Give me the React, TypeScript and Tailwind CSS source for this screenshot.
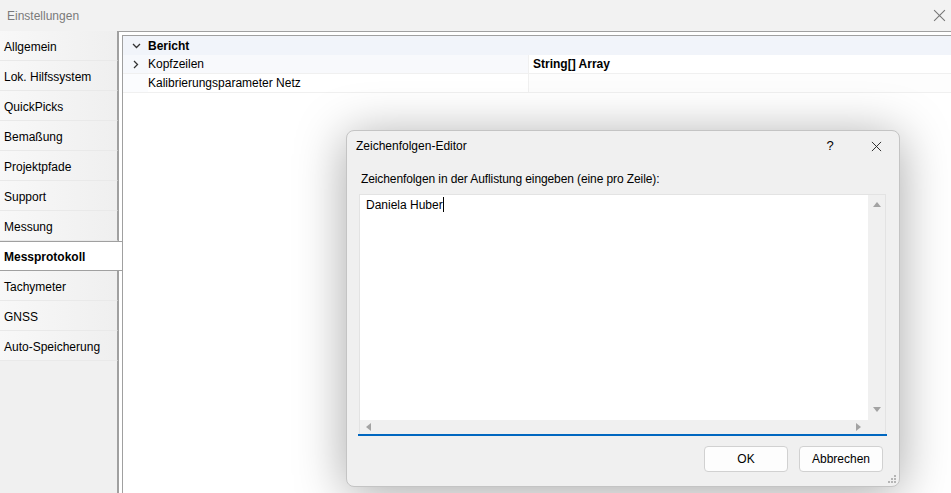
import React from "react";

const tabs = [
  "Allgemein",
  "Lok. Hilfssystem",
  "QuickPicks",
  "Bemaßung",
  "Projektpfade",
  "Support",
  "Messung",
  "Messprotokoll",
  "Tachymeter",
  "GNSS",
  "Auto-Speicherung",
];

const selected = "Messprotokoll";

function CloseIcon({ size = 12, color = "#333" }: { size?: number; color?: string }) {
  return (
    <svg width={size} height={size} viewBox="0 0 12 12" fill="none">
      <path d="M1 1L11 11M11 1L1 11" stroke={color} strokeWidth="1" />
    </svg>
  );
}

function Arrow({ dir }: { dir: "up" | "down" | "left" | "right" }) {
  const paths = {
    up: "M0 6L4 1L8 6Z",
    down: "M0 1L8 1L4 6Z",
    left: "M6 0L6 8L1 4Z",
    right: "M1 0L6 4L1 8Z",
  };
  return (
    <svg width="8" height="8" viewBox="0 0 8 8">
      <path d={paths[dir]} fill="#a3a3a3" />
    </svg>
  );
}

function Sidebar() {
  return (
    <div className="w-[118px] shrink-0 flex flex-col bg-[#f0f0f0]">
      {tabs.map((t) =>
        t === selected ? (
          <div
            key={t}
            className="relative z-10 w-[122px] h-[30px] flex items-center pl-[4px] pt-[1px] bg-white border-y border-[#a0a0a0] font-bold text-black"
          >
            {t}
          </div>
        ) : (
          <div
            key={t}
            className="h-[30px] flex items-center pl-[4px] pt-[2px] border-r border-[#a0a0a0] border-b border-b-[#e9e9e9] bg-gradient-to-r from-[#f8f8f8] to-[#efefef] text-black"
          >
            {t}
          </div>
        )
      )}
      <div className="flex-1 border-r border-[#a0a0a0]" />
    </div>
  );
}

function PropertyGrid() {
  return (
    <div className="flex-1 border-l border-t border-[#a0a0a0] bg-white pl-[3px] pt-[3px]">
      <div className="h-full border-l border-t border-[#a0a0a0] bg-white">
        <div className="h-[19px] flex items-center bg-[#f1f4fa]">
          <div className="w-[25px] flex justify-center pl-[1px]">
            <svg width="9" height="6" viewBox="0 0 9 6" fill="none">
              <path d="M1 1L4.5 4.5L8 1" stroke="#333" strokeWidth="1.3" />
            </svg>
          </div>
          <span className="font-bold">Bericht</span>
        </div>
        <div className="h-[19px] flex items-stretch border-b border-[#f0f0f0]">
          <div className="w-[25px] flex items-center justify-center bg-[#f6f8fc]">
            <svg width="6" height="9" viewBox="0 0 6 9" fill="none">
              <path d="M1 1L4.5 4.5L1 8" stroke="#333" strokeWidth="1.3" />
            </svg>
          </div>
          <div className="w-[381px] flex items-center bg-[#f8f9fc] border-r border-[#f0f0f0]">Kopfzeilen</div>
          <div className="flex-1 flex items-center pl-[4px] font-bold">String[] Array</div>
        </div>
        <div className="h-[19px] flex items-stretch border-b border-[#f0f0f0]">
          <div className="w-[25px] bg-[#fbfcfe]" />
          <div className="w-[381px] flex items-center border-r border-[#f0f0f0]">Kalibrierungsparameter Netz</div>
          <div className="flex-1 bg-[#fdfdfd]" />
        </div>
      </div>
    </div>
  );
}

function Dialog() {
  return (
    <div className="absolute left-[346px] top-[130px] w-[554px] h-[357px] rounded-[8px] bg-[#f0f0f0] border border-[#c4c4c4] shadow-[0_6px_50px_rgba(0,0,0,0.35)] flex flex-col">
      <div className="h-[30px] flex items-center pl-[9px]">
        <span className="flex-1">Zeichenfolgen-Editor</span>
        <span className="w-[46px] text-center text-[13px]">?</span>
        <div className="w-[46px] flex justify-center">
          <CloseIcon size={11} color="#222" />
        </div>
      </div>
      <div className="pl-[14px] pt-[9px] h-[33px] tracking-[-0.1px]">Zeichenfolgen in der Auflistung eingeben (eine pro Zeile):</div>
      <div className="ml-[12px] mr-[13px] h-[242px] flex flex-col border border-[#e3e3e3] border-b-0">
        <div className="flex-1 flex">
          <div className="flex-1 bg-white pl-[6px] pt-[1px]">
            <span>Daniela Huber</span>
            <span className="inline-block w-[1px] h-[15px] bg-black align-middle -mt-[2px]" />
          </div>
          <div className="w-[17px] bg-[#f0f0f0] flex flex-col items-center justify-between py-[6px]">
            <Arrow dir="up" />
            <Arrow dir="down" />
          </div>
        </div>
        <div className="h-[14px] flex items-center justify-between pl-[5px] pr-[22px] bg-[#f0f0f0]">
          <Arrow dir="left" />
          <Arrow dir="right" />
        </div>
        <div className="h-[2px] bg-[#0067c0] -mx-[2px]" />
      </div>
      <div className="flex justify-end gap-[11px] mr-[16px] mt-[10px]">
        <button className="w-[84px] h-[26px] rounded-[4px] bg-[#fdfdfd] border border-[#d1d1d1] text-black">OK</button>
        <button className="w-[84px] h-[26px] rounded-[4px] bg-[#fdfdfd] border border-[#d1d1d1] text-black">Abbrechen</button>
      </div>
      <div className="absolute right-[2px] bottom-[2px]">
        <svg width="10" height="10" viewBox="0 0 10 10">
          <rect x="7" y="1" width="2" height="2" fill="#b5b5b5" />
          <rect x="4" y="4" width="2" height="2" fill="#b5b5b5" />
          <rect x="7" y="4" width="2" height="2" fill="#b5b5b5" />
          <rect x="1" y="7" width="2" height="2" fill="#b5b5b5" />
          <rect x="4" y="7" width="2" height="2" fill="#b5b5b5" />
          <rect x="7" y="7" width="2" height="2" fill="#b5b5b5" />
        </svg>
      </div>
    </div>
  );
}

export default function App() {
  return (
    <div className="relative w-[951px] h-[493px] overflow-hidden bg-[#f0f0f0] font-['Liberation_Sans',sans-serif] text-[12px] text-black">
      <div className="h-[31px] flex items-center pl-[7px] pr-[5px] bg-[#f2f2f2]">
        <span className="flex-1 text-[#7a7a7a]">Einstellungen</span>
        <CloseIcon size={13} color="#777" />
      </div>
      <div className="flex h-[462px]">
        <Sidebar />
        <PropertyGrid />
      </div>
      <Dialog />
    </div>
  );
}
